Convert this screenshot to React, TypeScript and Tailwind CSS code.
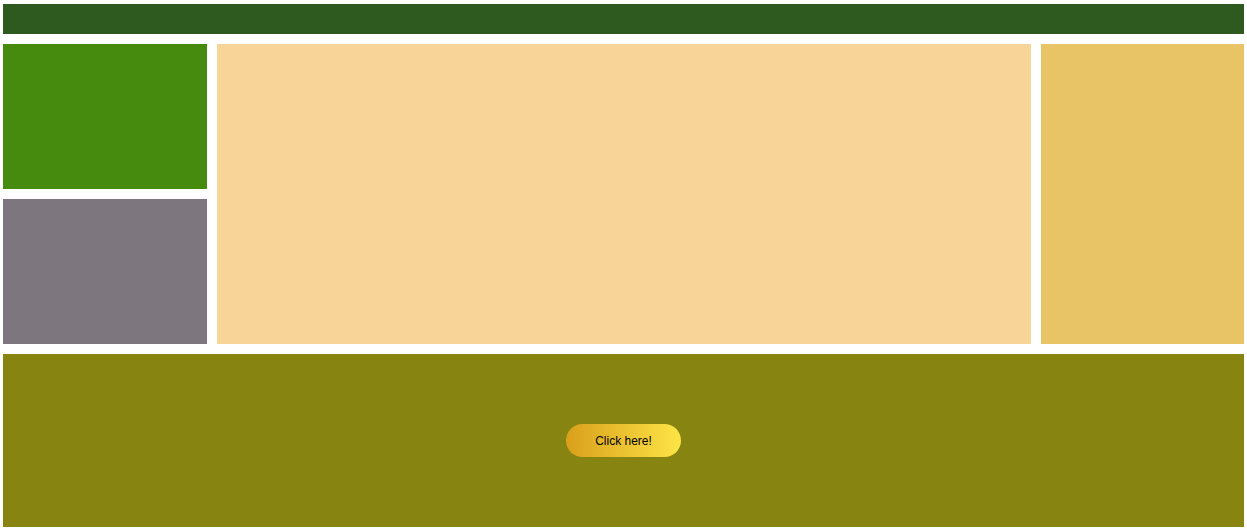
export default function App() {
  return (
    <div className="bg-white px-[3px] pt-[4px] pb-[4px] font-['Liberation_Sans',Arial,sans-serif]">
      <div className="flex flex-col gap-[10px]">
        <header className="h-[30px] bg-[#2e5a20]" />
        <div className="flex gap-[10px] h-[300px]">
          <div className="w-[204px] flex flex-col gap-[10px]">
            <div className="flex-1 bg-[#468b0e]" />
            <div className="flex-1 bg-[#7d767e]" />
          </div>
          <main className="flex-1 bg-[#f8d498]" />
          <aside className="w-[203px] bg-[#e9c467]" />
        </div>
        <footer className="h-[173px] bg-[#888412] flex items-center justify-center">
          <button
            type="button"
            className="w-[115px] h-[33px] rounded-full bg-gradient-to-r from-[#d9a01b] to-[#fde545] text-[12px] text-black"
          >
            Click here!
          </button>
        </footer>
      </div>
    </div>
  );
}
